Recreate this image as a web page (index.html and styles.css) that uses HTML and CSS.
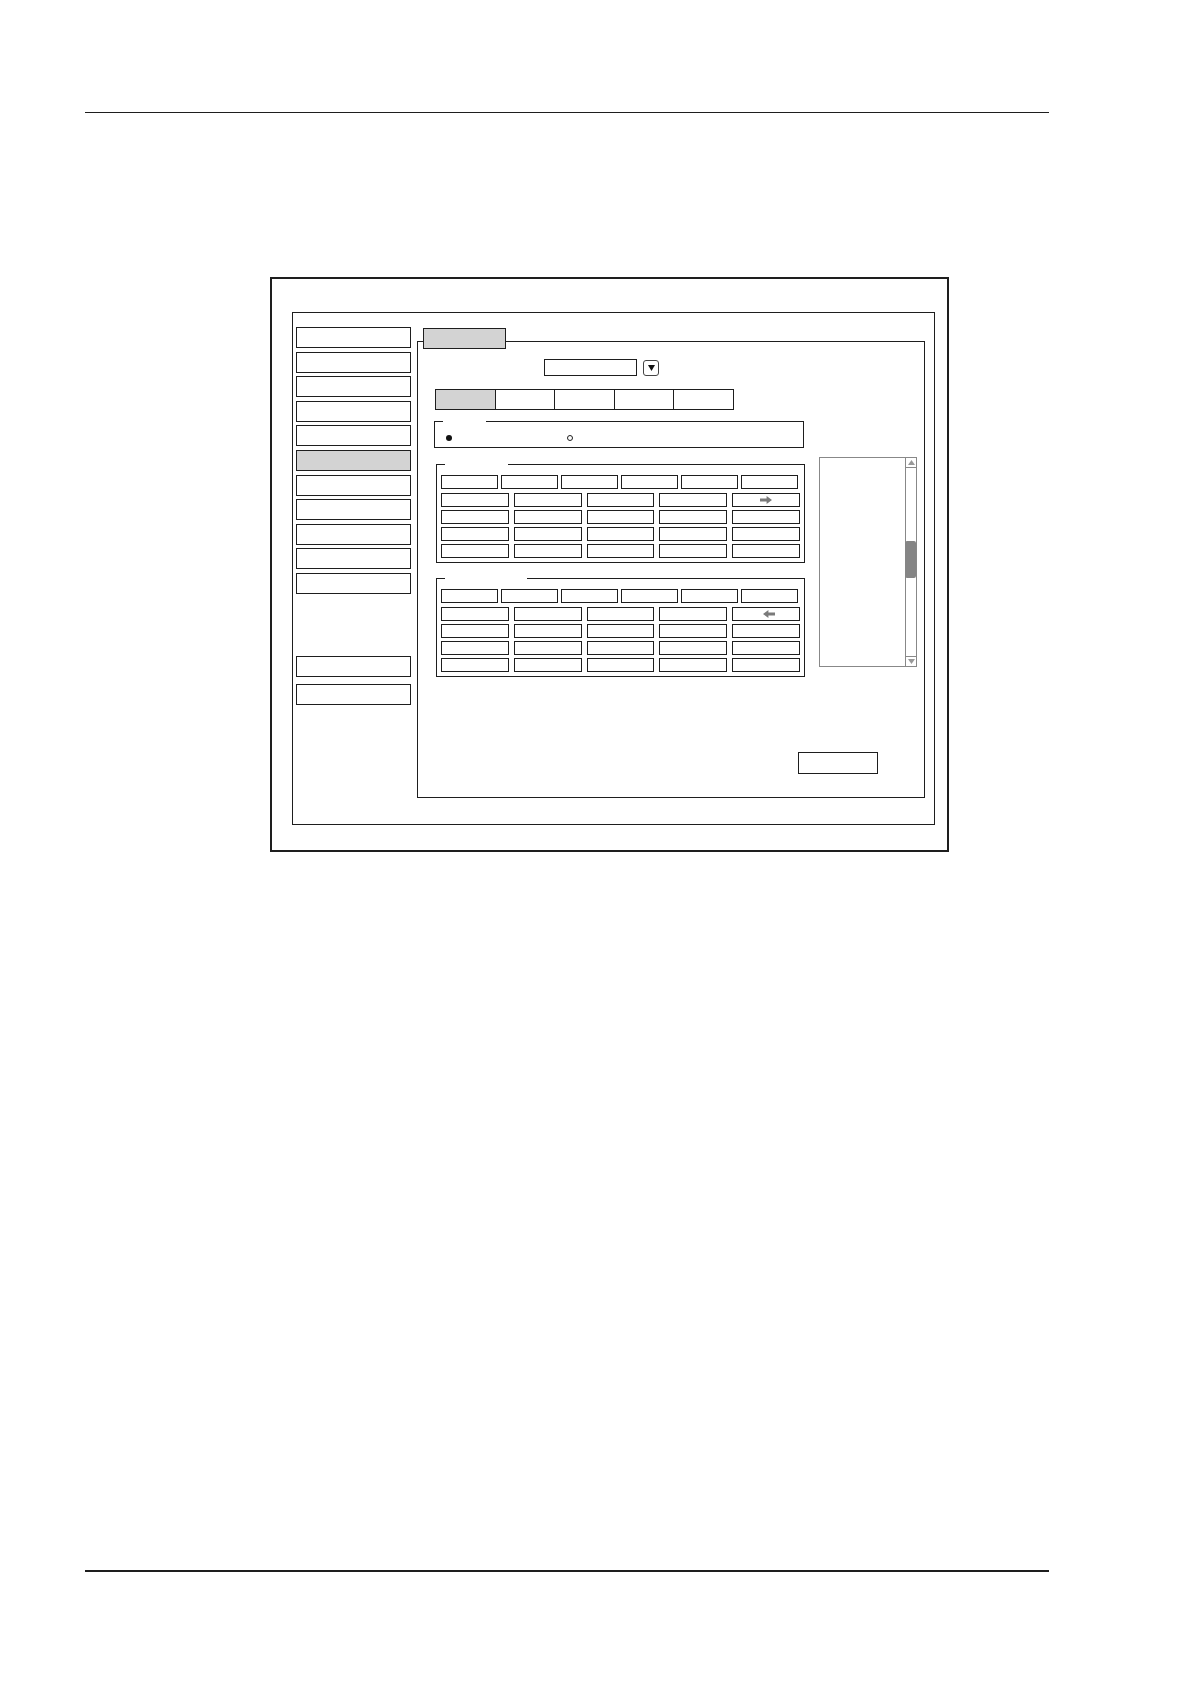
FILE: index.html
```html
<!DOCTYPE html>
<html>
<head>
<meta charset="utf-8">
<title>Settings dialog</title>
<link rel="stylesheet" href="styles.css">
</head>
<body>
<div class="page">
  <div class="rule-top"></div>
  <div class="figure">
    <div class="window">
      <div class="nav">
        <div class="nav-btn"></div>
        <div class="nav-btn"></div>
        <div class="nav-btn"></div>
        <div class="nav-btn"></div>
        <div class="nav-btn"></div>
        <div class="nav-btn active"></div>
        <div class="nav-btn"></div>
        <div class="nav-btn"></div>
        <div class="nav-btn"></div>
        <div class="nav-btn"></div>
        <div class="nav-btn"></div>
        <div class="nav-btn lower-first"></div>
        <div class="nav-btn lower-second"></div>
      </div>
      <div class="main">
        <div class="tab"></div>
        <div class="panel">
          <div class="dd-row">
            <div class="dd-input"></div>
            <div class="dd-btn">
              <svg width="7" height="6" viewBox="0 0 7 6"><polygon points="0,0 7,0 3.5,6" fill="#111"/></svg>
            </div>
          </div>
          <div class="segs">
            <div class="seg on"></div>
            <div class="seg"></div>
            <div class="seg"></div>
            <div class="seg"></div>
            <div class="seg"></div>
          </div>
          <div class="radio-box">
            <span class="legend-gap w43"></span>
            <span class="radio filled"></span>
            <span class="radio empty"></span>
          </div>
          <div class="lower">
            <div class="groups">
              <div class="group">
                <span class="legend-gap w63"></span>
                <div class="hdr">
                  <div class="hcell"></div><div class="hcell"></div><div class="hcell"></div>
                  <div class="hcell"></div><div class="hcell"></div><div class="hcell"></div>
                </div>
                <div class="rows">
                  <div class="row">
                    <div class="cell"></div><div class="cell"></div><div class="cell"></div><div class="cell"></div>
                    <div class="cell icon">
                      <svg width="12" height="8" viewBox="0 0 12 8"><path d="M0 2.4H6.6V0L12 4L6.6 8V5.6H0Z" fill="#7a7a7a"/></svg>
                    </div>
                  </div>
                  <div class="row">
                    <div class="cell"></div><div class="cell"></div><div class="cell"></div><div class="cell"></div><div class="cell"></div>
                  </div>
                  <div class="row">
                    <div class="cell"></div><div class="cell"></div><div class="cell"></div><div class="cell"></div><div class="cell"></div>
                  </div>
                  <div class="row">
                    <div class="cell"></div><div class="cell"></div><div class="cell"></div><div class="cell"></div><div class="cell"></div>
                  </div>
                </div>
              </div>
              <div class="group second">
                <span class="legend-gap w82"></span>
                <div class="hdr">
                  <div class="hcell"></div><div class="hcell"></div><div class="hcell"></div>
                  <div class="hcell"></div><div class="hcell"></div><div class="hcell"></div>
                </div>
                <div class="rows">
                  <div class="row">
                    <div class="cell"></div><div class="cell"></div><div class="cell"></div><div class="cell"></div>
                    <div class="cell icon shift">
                      <svg width="12" height="8" viewBox="0 0 12 8"><path d="M12 2.4H5.4V0L0 4L5.4 8V5.6H12Z" fill="#7a7a7a"/></svg>
                    </div>
                  </div>
                  <div class="row">
                    <div class="cell"></div><div class="cell"></div><div class="cell"></div><div class="cell"></div><div class="cell"></div>
                  </div>
                  <div class="row">
                    <div class="cell"></div><div class="cell"></div><div class="cell"></div><div class="cell"></div><div class="cell"></div>
                  </div>
                  <div class="row">
                    <div class="cell"></div><div class="cell"></div><div class="cell"></div><div class="cell"></div><div class="cell"></div>
                  </div>
                </div>
              </div>
            </div>
            <div class="listbox">
              <div class="list-area"></div>
              <div class="scrollbar">
                <div class="sb-btn up">
                  <svg width="7" height="5" viewBox="0 0 7 5"><polygon points="3.5,0 7,5 0,5" fill="#999"/></svg>
                </div>
                <div class="sb-track"><div class="sb-thumb"></div></div>
                <div class="sb-btn down">
                  <svg width="7" height="5" viewBox="0 0 7 5"><polygon points="0,0 7,0 3.5,5" fill="#999"/></svg>
                </div>
              </div>
            </div>
          </div>
          <div class="save-btn"></div>
        </div>
      </div>
    </div>
  </div>
  <div class="rule-bottom"></div>
</div>
</body>
</html>
```

FILE: styles.css
```css
* { box-sizing: border-box; }
html, body { margin: 0; padding: 0; background: #fff; }
body { font-family: "Liberation Sans", Arial, sans-serif; }

.page {
  width: 1191px;
  height: 1684px;
  padding-top: 112px;
  padding-left: 85px;
}

.rule-top {
  width: 964px;
  height: 1px;
  background: #1e1e1e;
}

.rule-bottom {
  width: 964px;
  height: 2px;
  margin-top: 718px;
  background: #1e1e1e;
}

.figure {
  margin-top: 164px;
  margin-left: 185px;
  width: 679px;
  height: 575px;
  border: 2px solid #1e1e1e;
  padding: 33px 12px 25px 20px;
}

.window {
  width: 643px;
  height: 513px;
  border: 1px solid #1e1e1e;
  display: flex;
  align-items: flex-start;
}

.nav {
  margin-left: 3px;
  margin-top: 14px;
  width: 115px;
  display: flex;
  flex-direction: column;
  gap: 3.6px;
}

.nav-btn {
  width: 115px;
  height: 21px;
  border: 1px solid #1e1e1e;
  background: #fff;
}
.nav-btn.active { background: #d3d3d3; }
.nav-btn.lower-first { margin-top: 58.4px; }
.nav-btn.lower-second { margin-top: 3.4px; }

.main {
  margin-left: 6px;
  margin-top: 15px;
  width: 508px;
}

.tab {
  position: relative;
  z-index: 1;
  margin-left: 6px;
  width: 83px;
  height: 21px;
  border: 1px solid #1e1e1e;
  background: #d3d3d3;
}

.panel {
  margin-top: -8px;
  width: 508px;
  height: 457px;
  border: 1px solid #1e1e1e;
  padding-top: 17px;
}

.dd-row {
  display: flex;
  gap: 6px;
  margin-left: 126px;
  align-items: flex-start;
}
.dd-input {
  width: 93px;
  height: 17px;
  border: 1px solid #1e1e1e;
}
.dd-btn {
  margin-top: 1px;
  width: 16px;
  height: 16px;
  border: 1px solid #444;
  border-radius: 3px;
  display: flex;
  align-items: center;
  justify-content: center;
}

.segs {
  margin-top: 13px;
  margin-left: 17px;
  width: 299px;
  height: 21px;
  border: 1px solid #1e1e1e;
  display: flex;
}
.seg { flex: 1; }
.seg + .seg { border-left: 1px solid #1e1e1e; }
.seg.on { background: #d3d3d3; }

.radio-box {
  position: relative;
  margin-top: 11px;
  margin-left: 16px;
  width: 370px;
  height: 27px;
  border: 1px solid #1e1e1e;
  display: flex;
  align-items: flex-start;
  padding: 13px 0 0 11px;
}
.radio {
  width: 6px;
  height: 6px;
  border-radius: 50%;
}
.radio.filled { background: #111; }
.radio.empty { border: 1px solid #1e1e1e; margin-left: 115px; }

.legend-gap {
  position: absolute;
  top: -1px;
  left: 8px;
  height: 1px;
  background: #fff;
}
.legend-gap.w43 { width: 43px; }
.legend-gap.w63 { width: 63px; }
.legend-gap.w82 { width: 82px; }

.lower {
  margin-top: 9px;
  display: flex;
  align-items: flex-start;
}

.groups {
  margin-left: 18px;
  margin-top: 7px;
  width: 369px;
}

.group {
  position: relative;
  width: 369px;
  border: 1px solid #1e1e1e;
  padding: 9.5px 4px 4px 4px;
}
.group.second { margin-top: 15px; }

.hdr {
  display: flex;
  gap: 3px;
  height: 14.5px;
}
.hcell {
  width: 57px;
  height: 14.5px;
  border: 1px solid #1e1e1e;
}

.rows {
  margin-top: 4px;
  display: flex;
  flex-direction: column;
  gap: 3px;
}
.row {
  display: grid;
  grid-template-columns: repeat(5, 1fr);
  column-gap: 5px;
  height: 14px;
}
.cell {
  height: 14px;
  border: 1px solid #1e1e1e;
}
.cell.icon {
  display: flex;
  align-items: center;
  justify-content: center;
}
.cell.icon.shift svg { margin-left: 6px; }

.listbox {
  margin-left: 14px;
  width: 98px;
  height: 210px;
  border: 1px solid #888;
  display: flex;
}
.list-area { flex: 1; }
.scrollbar {
  width: 11px;
  border-left: 1px solid #888;
  display: flex;
  flex-direction: column;
}
.sb-btn {
  height: 10px;
  display: flex;
  align-items: center;
  justify-content: center;
}
.sb-btn.up { border-bottom: 1px solid #888; }
.sb-btn.down { border-top: 1px solid #888; }
.sb-track { flex: 1; }
.sb-thumb {
  margin-top: 73px;
  margin-left: -1px;
  width: 11px;
  height: 37px;
  background: #858585;
  border-radius: 2px;
}

.save-btn {
  margin-top: 75px;
  margin-left: 380px;
  width: 80px;
  height: 22px;
  border: 1px solid #1e1e1e;
}
```
